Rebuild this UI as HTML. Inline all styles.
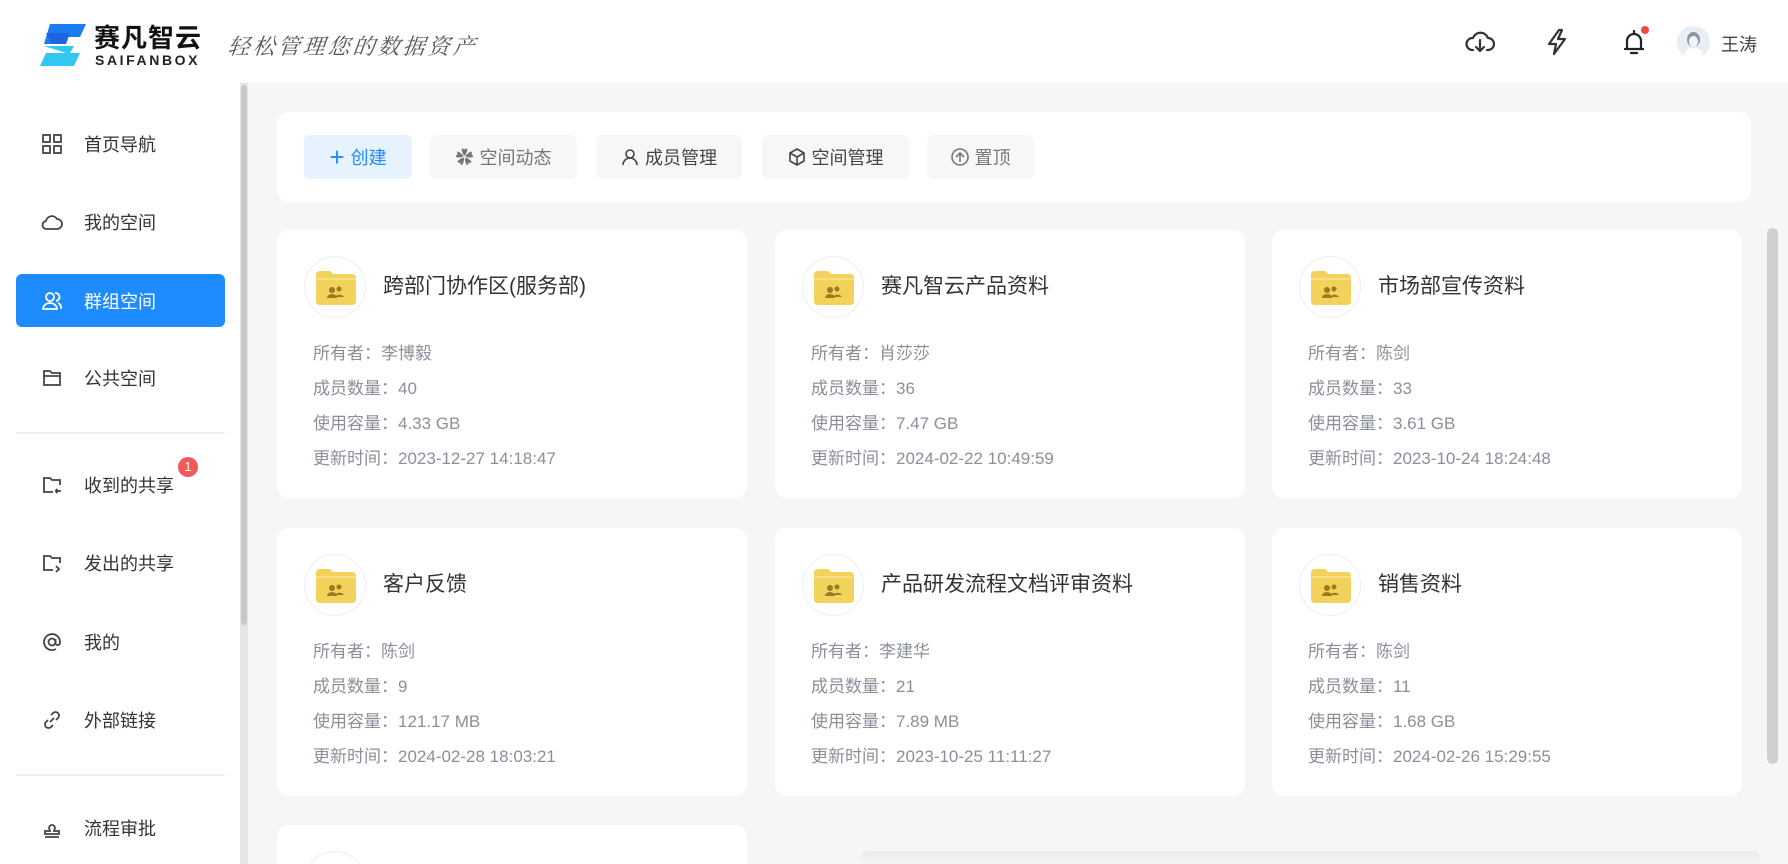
<!DOCTYPE html>
<html style="width:1788px;height:864px;overflow:hidden"><head><meta charset="utf-8"><style>
*{margin:0;padding:0;box-sizing:border-box}
body{width:1788px;height:864px;overflow:hidden;background:#f5f6f8;font-family:"Liberation Sans","Noto Sans CJK SC",sans-serif;position:relative;color:#333}
.hdr{position:absolute;left:0;top:0;width:1788px;height:83px;background:#fff}
.side{position:absolute;left:0;top:83px;width:240px;height:781px;background:#fff}
.sb{position:absolute;left:240px;top:83px;width:8px;height:781px;background:#e6e6e6}
.sb i{position:absolute;left:1px;top:2px;width:6px;height:540px;background:#c8c8c8;border-radius:3px}
.item{position:absolute;left:16px;width:209px;height:53px;border-radius:6px;font-size:18px;color:#333;display:flex;align-items:center}
.item svg{position:absolute;left:25px;width:22px;height:22px}
.item span{position:absolute;left:68px}
.item.act{background:#1e8cff;color:#fff}
.div{position:absolute;left:16px;width:209px;height:2px;background:#eceef1}
.tb{position:absolute;left:277px;top:112px;width:1474px;height:90px;background:#fff;border-radius:12px}
.btn{position:absolute;top:23px;height:44px;border-radius:6px;background:#f5f7f9;font-size:18px;color:#444;display:flex;align-items:center;justify-content:center;gap:6px}
.card{position:absolute;width:470px;height:268px;background:#fff;border-radius:12px;overflow:hidden}
.av{position:absolute;left:27px;top:26px;width:62px;height:62px;border-radius:50%;border:1px solid #eee;background:#fff}
.av svg{position:absolute;left:11px;top:14px}
.ct{position:absolute;left:106px;top:43px;font-size:21px;color:#333;line-height:28px}
.ln{position:absolute;left:36px;font-size:17px;color:#8a8f99;line-height:22px}
</style></head><body>
<div class="hdr">
 <svg style="position:absolute;left:40px;top:24px" width="48" height="42" viewBox="0 0 48 42"><path d="M10 0H46L40 13H18L14 20H4Z" fill="#1a7cf0"/><path d="M4 22H34L30 29H40L34 42H0L6 29H26Z" fill="#27c3ef" opacity=".95"/><path d="M6 9H30L26 20H12Z" fill="#1f63e0"/></svg>
 <div style="position:absolute;left:94px;top:18px;font-size:26px;font-weight:bold;color:#111;letter-spacing:1px">赛凡智云</div>
 <div style="position:absolute;left:95px;top:52px;font-size:14px;font-weight:bold;color:#222;letter-spacing:2.6px">SAIFANBOX</div>
 <div style="position:absolute;left:228px;top:30px;font-size:22px;color:#555;font-family:'Liberation Serif','Noto Serif CJK SC',serif;font-style:italic;letter-spacing:3px;transform:skewX(-6deg)">轻松管理您的数据资产</div>
 <svg style="position:absolute;left:1465px;top:28px" width="30" height="28" viewBox="0 0 30 28" fill="none" stroke="#333" stroke-width="2.2" stroke-linecap="round" stroke-linejoin="round"><path d="M8 22H7A6 6 0 0 1 8 10 8 8 0 0 1 23 10 6 6 0 0 1 23 22H22"/><path d="M15 12V23M11 19L15 23 19 19"/></svg>
 <svg style="position:absolute;left:1545px;top:28px" width="24" height="28" viewBox="0 0 24 28" fill="none" stroke="#333" stroke-width="2.2" stroke-linejoin="round"><path d="M14 2L4 16H11L9 26 20 11H13L17 2Z"/></svg>
 <svg style="position:absolute;left:1622px;top:28px" width="24" height="28" viewBox="0 0 24 28" fill="none" stroke="#222" stroke-width="2.2" stroke-linecap="round"><path d="M12 3V5M5 21V13A7 7 0 0 1 19 13V21H3M21 21H19M9 25H15"/></svg>
 <div style="position:absolute;left:1641px;top:26px;width:8px;height:8px;border-radius:50%;background:#f04848"></div>
 <div style="position:absolute;left:1677px;top:26px;width:33px;height:33px;border-radius:50%;background:#e8eef6;overflow:hidden"><div style="position:absolute;left:10px;top:6px;width:13px;height:15px;border-radius:50%;background:#8a96a6"></div><div style="position:absolute;left:12px;top:10px;width:9px;height:11px;border-radius:50%;background:#f3f3f3"></div><div style="position:absolute;left:7px;top:22px;width:19px;height:14px;border-radius:8px 8px 0 0;background:#fff"></div></div>
 <div style="position:absolute;left:1721px;top:31px;font-size:18px;color:#444">王涛</div>
</div>
<div class="side">
 <div class="item" style="top:34px"><svg viewBox="0 0 22 22" fill="none" stroke="#444" stroke-width="1.8"><rect x="2" y="2" width="7" height="7"/><rect x="13" y="2" width="7" height="7"/><rect x="2" y="13" width="7" height="7"/><rect x="13" y="13" width="7" height="7"/></svg><span>首页导航</span></div>
 <div class="item" style="top:112px"><svg viewBox="0 0 22 22" fill="none" stroke="#444" stroke-width="1.8"><path d="M6 18A4 4 0 0 1 5 10 6 6 0 0 1 16 8 5 5 0 0 1 16 18Z"/></svg><span>我的空间</span></div>
 <div class="item act" style="top:191px"><svg viewBox="0 0 22 22" fill="none" stroke="#fff" stroke-width="1.8"><circle cx="9" cy="7" r="4"/><path d="M2 19A7 6 0 0 1 16 19ZM14 3A4 4 0 0 1 15 11M17 13A5 5 0 0 1 20 19"/></svg><span>群组空间</span></div>
 <div class="item" style="top:268px"><svg viewBox="0 0 22 22" fill="none" stroke="#444" stroke-width="1.8"><path d="M3 4H9L11 6H19V18H3ZM3 9H19"/></svg><span>公共空间</span></div>
 <div class="div" style="top:349px"></div>
 <div class="item" style="top:375px"><svg viewBox="0 0 22 22" fill="none" stroke="#444" stroke-width="1.8"><path d="M19 11V6H11L9 4H3V18H12M15 15L17 17 15 19M20 17H14"/></svg><span>收到的共享</span></div>
 <div style="position:absolute;left:178px;top:374px;width:20px;height:20px;border-radius:50%;background:#f05a5a;color:#fff;font-size:13px;text-align:center;line-height:20px">1</div>
 <div class="item" style="top:453px"><svg viewBox="0 0 22 22" fill="none" stroke="#444" stroke-width="1.8"><path d="M19 11V6H11L9 4H3V18H12M15 14L18 17 15 20"/></svg><span>发出的共享</span></div>
 <div class="item" style="top:532px"><svg viewBox="0 0 22 22" fill="none" stroke="#444" stroke-width="1.8"><circle cx="11" cy="11" r="3.5"/><path d="M14.5 8V13A2.5 2.5 0 0 0 19 12V11A8 8 0 1 0 15 18"/></svg><span>我的</span></div>
 <div class="item" style="top:610px"><svg viewBox="0 0 22 22" fill="none" stroke="#444" stroke-width="1.8"><path d="M9 13L13 9M10 6L12 4A3 3 0 0 1 17 9L15 11M12 16L10 18A3 3 0 0 1 5 13L7 11"/></svg><span>外部链接</span></div>
 <div class="div" style="top:691px"></div>
 <div class="item" style="top:718px"><svg viewBox="0 0 22 22" fill="none" stroke="#444" stroke-width="1.8"><path d="M8 11A3 3 0 1 1 14 11L13 14H18V17H4V14H9ZM4 20H18"/></svg><span>流程审批</span></div>
</div>
<div class="sb"><i></i></div>
<div class="tb">
 <div class="btn" style="left:27px;width:108px;background:#e6f2fd;color:#1e8cff"><span style="font-size:26px;font-weight:300;line-height:20px">+</span>创建</div>
 <div class="btn" style="left:153px;width:147px;color:#777"><span style="font-size:18px">✿</span>空间动态</div>
 <div class="btn" style="left:319px;width:146px"><svg width="18" height="18" viewBox="0 0 18 18" fill="none" stroke="#444" stroke-width="1.6"><circle cx="9" cy="6" r="4"/><path d="M2 17A7 7 0 0 1 16 17"/></svg>成员管理</div>
 <div class="btn" style="left:485px;width:147px"><svg width="18" height="18" viewBox="0 0 18 18" fill="none" stroke="#444" stroke-width="1.6" stroke-linejoin="round"><path d="M9 1L16 5V13L9 17 2 13V5ZM2 5L9 9 16 5M9 9V17"/></svg>空间管理</div>
 <div class="btn" style="left:650px;width:107px;color:#777"><svg width="18" height="18" viewBox="0 0 18 18" fill="none" stroke="#777" stroke-width="1.6"><circle cx="9" cy="9" r="8"/><path d="M9 14V5M5 9L9 5 13 9"/></svg>置顶</div>
</div>
<div style="position:absolute;left:1767px;top:228px;width:11px;height:536px;border-radius:5px;background:#d0d0d0"></div>
<div style="position:absolute;left:860px;top:851px;width:900px;height:13px;background:linear-gradient(#e8e9eb,#f5f6f8);border-radius:8px 8px 0 0"></div>

<div class="card" style="left:277px;top:230px"><div class="av"><svg width="40" height="34"><path d="M0 4Q0 0 4 0H14L17 3H36Q40 3 40 7V30Q40 34 36 34H4Q0 34 0 30Z" fill="#f3d25c"/><path d="M0 8H40" stroke="#f8e294" stroke-width="1.5"/><circle cx="16" cy="19" r="3" fill="#9a7b1e"/><circle cx="23" cy="18" r="2.5" fill="#9a7b1e"/><path d="M11 27A5 4 0 0 1 21 27ZM19 26A5 4 0 0 1 28 26" fill="#9a7b1e"/></svg></div><div class="ct">跨部门协作区(服务部)</div>
<div class="ln" style="top:113px">所有者：李博毅</div><div class="ln" style="top:148px">成员数量：40</div><div class="ln" style="top:183px">使用容量：4.33 GB</div><div class="ln" style="top:218px">更新时间：2023-12-27 14:18:47</div></div>

<div class="card" style="left:775px;top:230px"><div class="av"><svg width="40" height="34"><path d="M0 4Q0 0 4 0H14L17 3H36Q40 3 40 7V30Q40 34 36 34H4Q0 34 0 30Z" fill="#f3d25c"/><path d="M0 8H40" stroke="#f8e294" stroke-width="1.5"/><circle cx="16" cy="19" r="3" fill="#9a7b1e"/><circle cx="23" cy="18" r="2.5" fill="#9a7b1e"/><path d="M11 27A5 4 0 0 1 21 27ZM19 26A5 4 0 0 1 28 26" fill="#9a7b1e"/></svg></div><div class="ct">赛凡智云产品资料</div>
<div class="ln" style="top:113px">所有者：肖莎莎</div><div class="ln" style="top:148px">成员数量：36</div><div class="ln" style="top:183px">使用容量：7.47 GB</div><div class="ln" style="top:218px">更新时间：2024-02-22 10:49:59</div></div>

<div class="card" style="left:1272px;top:230px"><div class="av"><svg width="40" height="34"><path d="M0 4Q0 0 4 0H14L17 3H36Q40 3 40 7V30Q40 34 36 34H4Q0 34 0 30Z" fill="#f3d25c"/><path d="M0 8H40" stroke="#f8e294" stroke-width="1.5"/><circle cx="16" cy="19" r="3" fill="#9a7b1e"/><circle cx="23" cy="18" r="2.5" fill="#9a7b1e"/><path d="M11 27A5 4 0 0 1 21 27ZM19 26A5 4 0 0 1 28 26" fill="#9a7b1e"/></svg></div><div class="ct">市场部宣传资料</div>
<div class="ln" style="top:113px">所有者：陈剑</div><div class="ln" style="top:148px">成员数量：33</div><div class="ln" style="top:183px">使用容量：3.61 GB</div><div class="ln" style="top:218px">更新时间：2023-10-24 18:24:48</div></div>

<div class="card" style="left:277px;top:528px"><div class="av"><svg width="40" height="34"><path d="M0 4Q0 0 4 0H14L17 3H36Q40 3 40 7V30Q40 34 36 34H4Q0 34 0 30Z" fill="#f3d25c"/><path d="M0 8H40" stroke="#f8e294" stroke-width="1.5"/><circle cx="16" cy="19" r="3" fill="#9a7b1e"/><circle cx="23" cy="18" r="2.5" fill="#9a7b1e"/><path d="M11 27A5 4 0 0 1 21 27ZM19 26A5 4 0 0 1 28 26" fill="#9a7b1e"/></svg></div><div class="ct">客户反馈</div>
<div class="ln" style="top:113px">所有者：陈剑</div><div class="ln" style="top:148px">成员数量：9</div><div class="ln" style="top:183px">使用容量：121.17 MB</div><div class="ln" style="top:218px">更新时间：2024-02-28 18:03:21</div></div>

<div class="card" style="left:775px;top:528px"><div class="av"><svg width="40" height="34"><path d="M0 4Q0 0 4 0H14L17 3H36Q40 3 40 7V30Q40 34 36 34H4Q0 34 0 30Z" fill="#f3d25c"/><path d="M0 8H40" stroke="#f8e294" stroke-width="1.5"/><circle cx="16" cy="19" r="3" fill="#9a7b1e"/><circle cx="23" cy="18" r="2.5" fill="#9a7b1e"/><path d="M11 27A5 4 0 0 1 21 27ZM19 26A5 4 0 0 1 28 26" fill="#9a7b1e"/></svg></div><div class="ct">产品研发流程文档评审资料</div>
<div class="ln" style="top:113px">所有者：李建华</div><div class="ln" style="top:148px">成员数量：21</div><div class="ln" style="top:183px">使用容量：7.89 MB</div><div class="ln" style="top:218px">更新时间：2023-10-25 11:11:27</div></div>

<div class="card" style="left:1272px;top:528px"><div class="av"><svg width="40" height="34"><path d="M0 4Q0 0 4 0H14L17 3H36Q40 3 40 7V30Q40 34 36 34H4Q0 34 0 30Z" fill="#f3d25c"/><path d="M0 8H40" stroke="#f8e294" stroke-width="1.5"/><circle cx="16" cy="19" r="3" fill="#9a7b1e"/><circle cx="23" cy="18" r="2.5" fill="#9a7b1e"/><path d="M11 27A5 4 0 0 1 21 27ZM19 26A5 4 0 0 1 28 26" fill="#9a7b1e"/></svg></div><div class="ct">销售资料</div>
<div class="ln" style="top:113px">所有者：陈剑</div><div class="ln" style="top:148px">成员数量：11</div><div class="ln" style="top:183px">使用容量：1.68 GB</div><div class="ln" style="top:218px">更新时间：2024-02-26 15:29:55</div></div>

<div class="card" style="left:277px;top:825px;height:39px;border-radius:12px 12px 0 0"><div class="av"></div></div>
</body></html>
